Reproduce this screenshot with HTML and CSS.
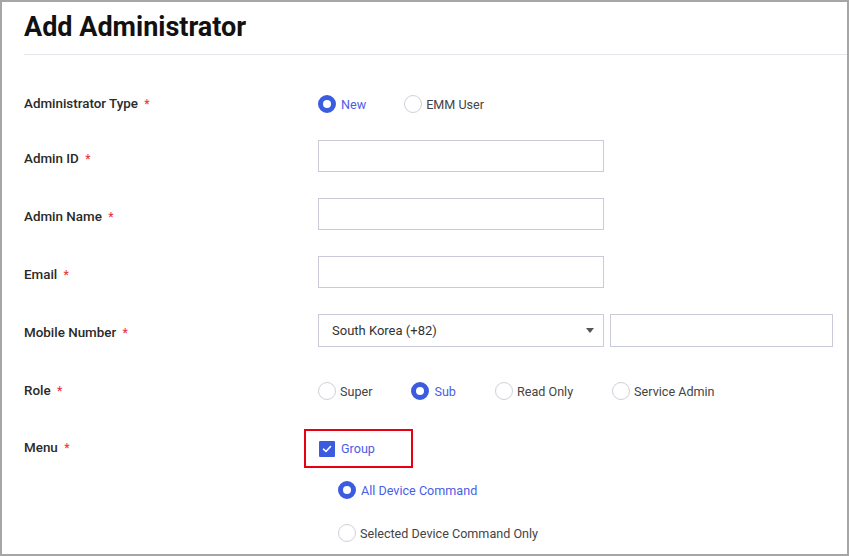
FILE: index.html
```html
<!DOCTYPE html>
<html>
<head>
<meta charset="utf-8">
<link rel="stylesheet" href="styles.css">
</head>
<body>
<div class="frame">
  <div class="header">
    <h1 class="title">Add Administrator</h1>
  </div>
  <div class="form">
    <div class="row row-type">
      <div class="label">Administrator Type <span class="req">*</span></div>
      <div class="field radios">
        <span class="radio-item checked"><span class="radio"></span>New</span>
        <span class="radio-item"><span class="radio"></span>EMM User</span>
      </div>
    </div>
    <div class="row row-input">
      <div class="label">Admin ID <span class="req">*</span></div>
      <div class="field"><div class="input"></div></div>
    </div>
    <div class="row row-input">
      <div class="label">Admin Name <span class="req">*</span></div>
      <div class="field"><div class="input"></div></div>
    </div>
    <div class="row row-input">
      <div class="label">Email <span class="req">*</span></div>
      <div class="field"><div class="input"></div></div>
    </div>
    <div class="row row-input">
      <div class="label">Mobile Number <span class="req">*</span></div>
      <div class="field mobile">
        <div class="input select"><span>South Korea (+82)</span><span class="caret"></span></div>
        <div class="input phone"></div>
      </div>
    </div>
    <div class="row row-role">
      <div class="label">Role <span class="req">*</span></div>
      <div class="field radios role-radios">
        <span class="radio-item"><span class="radio"></span>Super</span>
        <span class="radio-item checked"><span class="radio"></span>Sub</span>
        <span class="radio-item"><span class="radio"></span>Read Only</span>
        <span class="radio-item"><span class="radio"></span>Service Admin</span>
      </div>
    </div>
    <div class="row row-menu">
      <div class="label menu-label">Menu <span class="req">*</span></div>
      <div class="field menu">
        <div class="highlight">
          <span class="check-item"><span class="checkbox"><svg width="12" height="12" viewBox="0 0 12 12"><path d="M2.5 6.2 L5 8.5 L9.5 3.5" fill="none" stroke="#fff" stroke-width="1.6" stroke-linecap="round" stroke-linejoin="round"/></svg></span>Group</span>
        </div>
        <div class="sub-options">
          <span class="radio-item checked"><span class="radio"></span>All Device Command</span>
          <span class="radio-item"><span class="radio"></span>Selected Device Command Only</span>
        </div>
      </div>
    </div>
  </div>
</div>
</body>
</html>
```
FILE: styles.css
```css
* { box-sizing: border-box; }
html, body { margin: 0; padding: 0; background: #fff; }
body { font-family: Roboto, "Liberation Sans", sans-serif; color: #222; }

.frame {
  width: 849px;
  height: 556px;
  border: 2px solid #a6a6a6;
  overflow: hidden;
  background: #fff;
}

.header {
  margin-left: 22px;
  height: 53px;
  border-bottom: 1px solid #e6e7ec;
  display: flex;
  align-items: center;
}
.title {
  margin: 0;
  font-size: 27px;
  font-weight: 700;
  color: #111;
  line-height: 1;
  padding-bottom: 2px;
}

.form {
  padding-left: 22px;
  padding-top: 39px;
  display: flex;
  flex-direction: column;
}

.row {
  display: flex;
  align-items: center;
}
.label {
  width: 294px;
  flex: none;
  font-size: 13.4px;
  font-weight: 500;
  color: #2a2a2a;
  padding-bottom: 1px;
}
.row-input .label { padding-top: 5px; padding-bottom: 0; }
.req {
  color: #e8394a;
  font-size: 12px;
  margin-left: 3px;
}
.field { display: flex; align-items: center; }

.row-type { height: 20px; margin-bottom: 26px; }
.row-input { height: 32px; margin-bottom: 26px; }
.row-role { height: 20px; margin-top: 9px; margin-bottom: 28px; }
.row-menu { align-items: flex-start; }

.input {
  width: 286px;
  height: 32px;
  border: 1px solid #c9cbd9;
  background: #fff;
}
.mobile { gap: 6px; }
.select {
  height: 33px;
  display: flex;
  align-items: center;
  justify-content: space-between;
  padding: 0 9px 0 13px;
  font-size: 13px;
  color: #333;
}
.caret {
  width: 0; height: 0;
  border-left: 4px solid transparent;
  border-right: 4px solid transparent;
  border-top: 5px solid #555;
}
.phone { width: 223px; height: 33px; }

.radios { gap: 38px; }
.role-radios { gap: 39px; }
.radio-item {
  display: inline-flex;
  align-items: center;
  font-size: 12.6px;
  color: #444;
}
.radio {
  width: 18px;
  height: 18px;
  border-radius: 50%;
  border: 1px solid #cfd0da;
  margin-right: 4px;
  flex: none;
  background: #fff;
}
.radio-item.checked { color: #4a5ee6; }
.radio-item.checked .radio { border: 5px solid #3c5ce0; margin-right: 5px; }

.menu-label { padding-top: 11px; }
.menu { flex-direction: column; align-items: flex-start; margin-left: -14px; }
.highlight {
  width: 109px;
  height: 39px;
  border: 2px solid #e60012;
  display: flex;
  align-items: center;
  padding-left: 13px;
}
.check-item {
  display: inline-flex;
  align-items: center;
  font-size: 12.6px;
  color: #4a5ee6;
}
.checkbox {
  width: 16px;
  height: 16px;
  background: #3c5ce0;
  border-radius: 1px;
  display: inline-flex;
  align-items: center;
  justify-content: center;
  margin-right: 6px;
}
.sub-options {
  display: flex;
  flex-direction: column;
  margin-left: 34px;
  margin-top: 13px;
  gap: 25px;
}
```
